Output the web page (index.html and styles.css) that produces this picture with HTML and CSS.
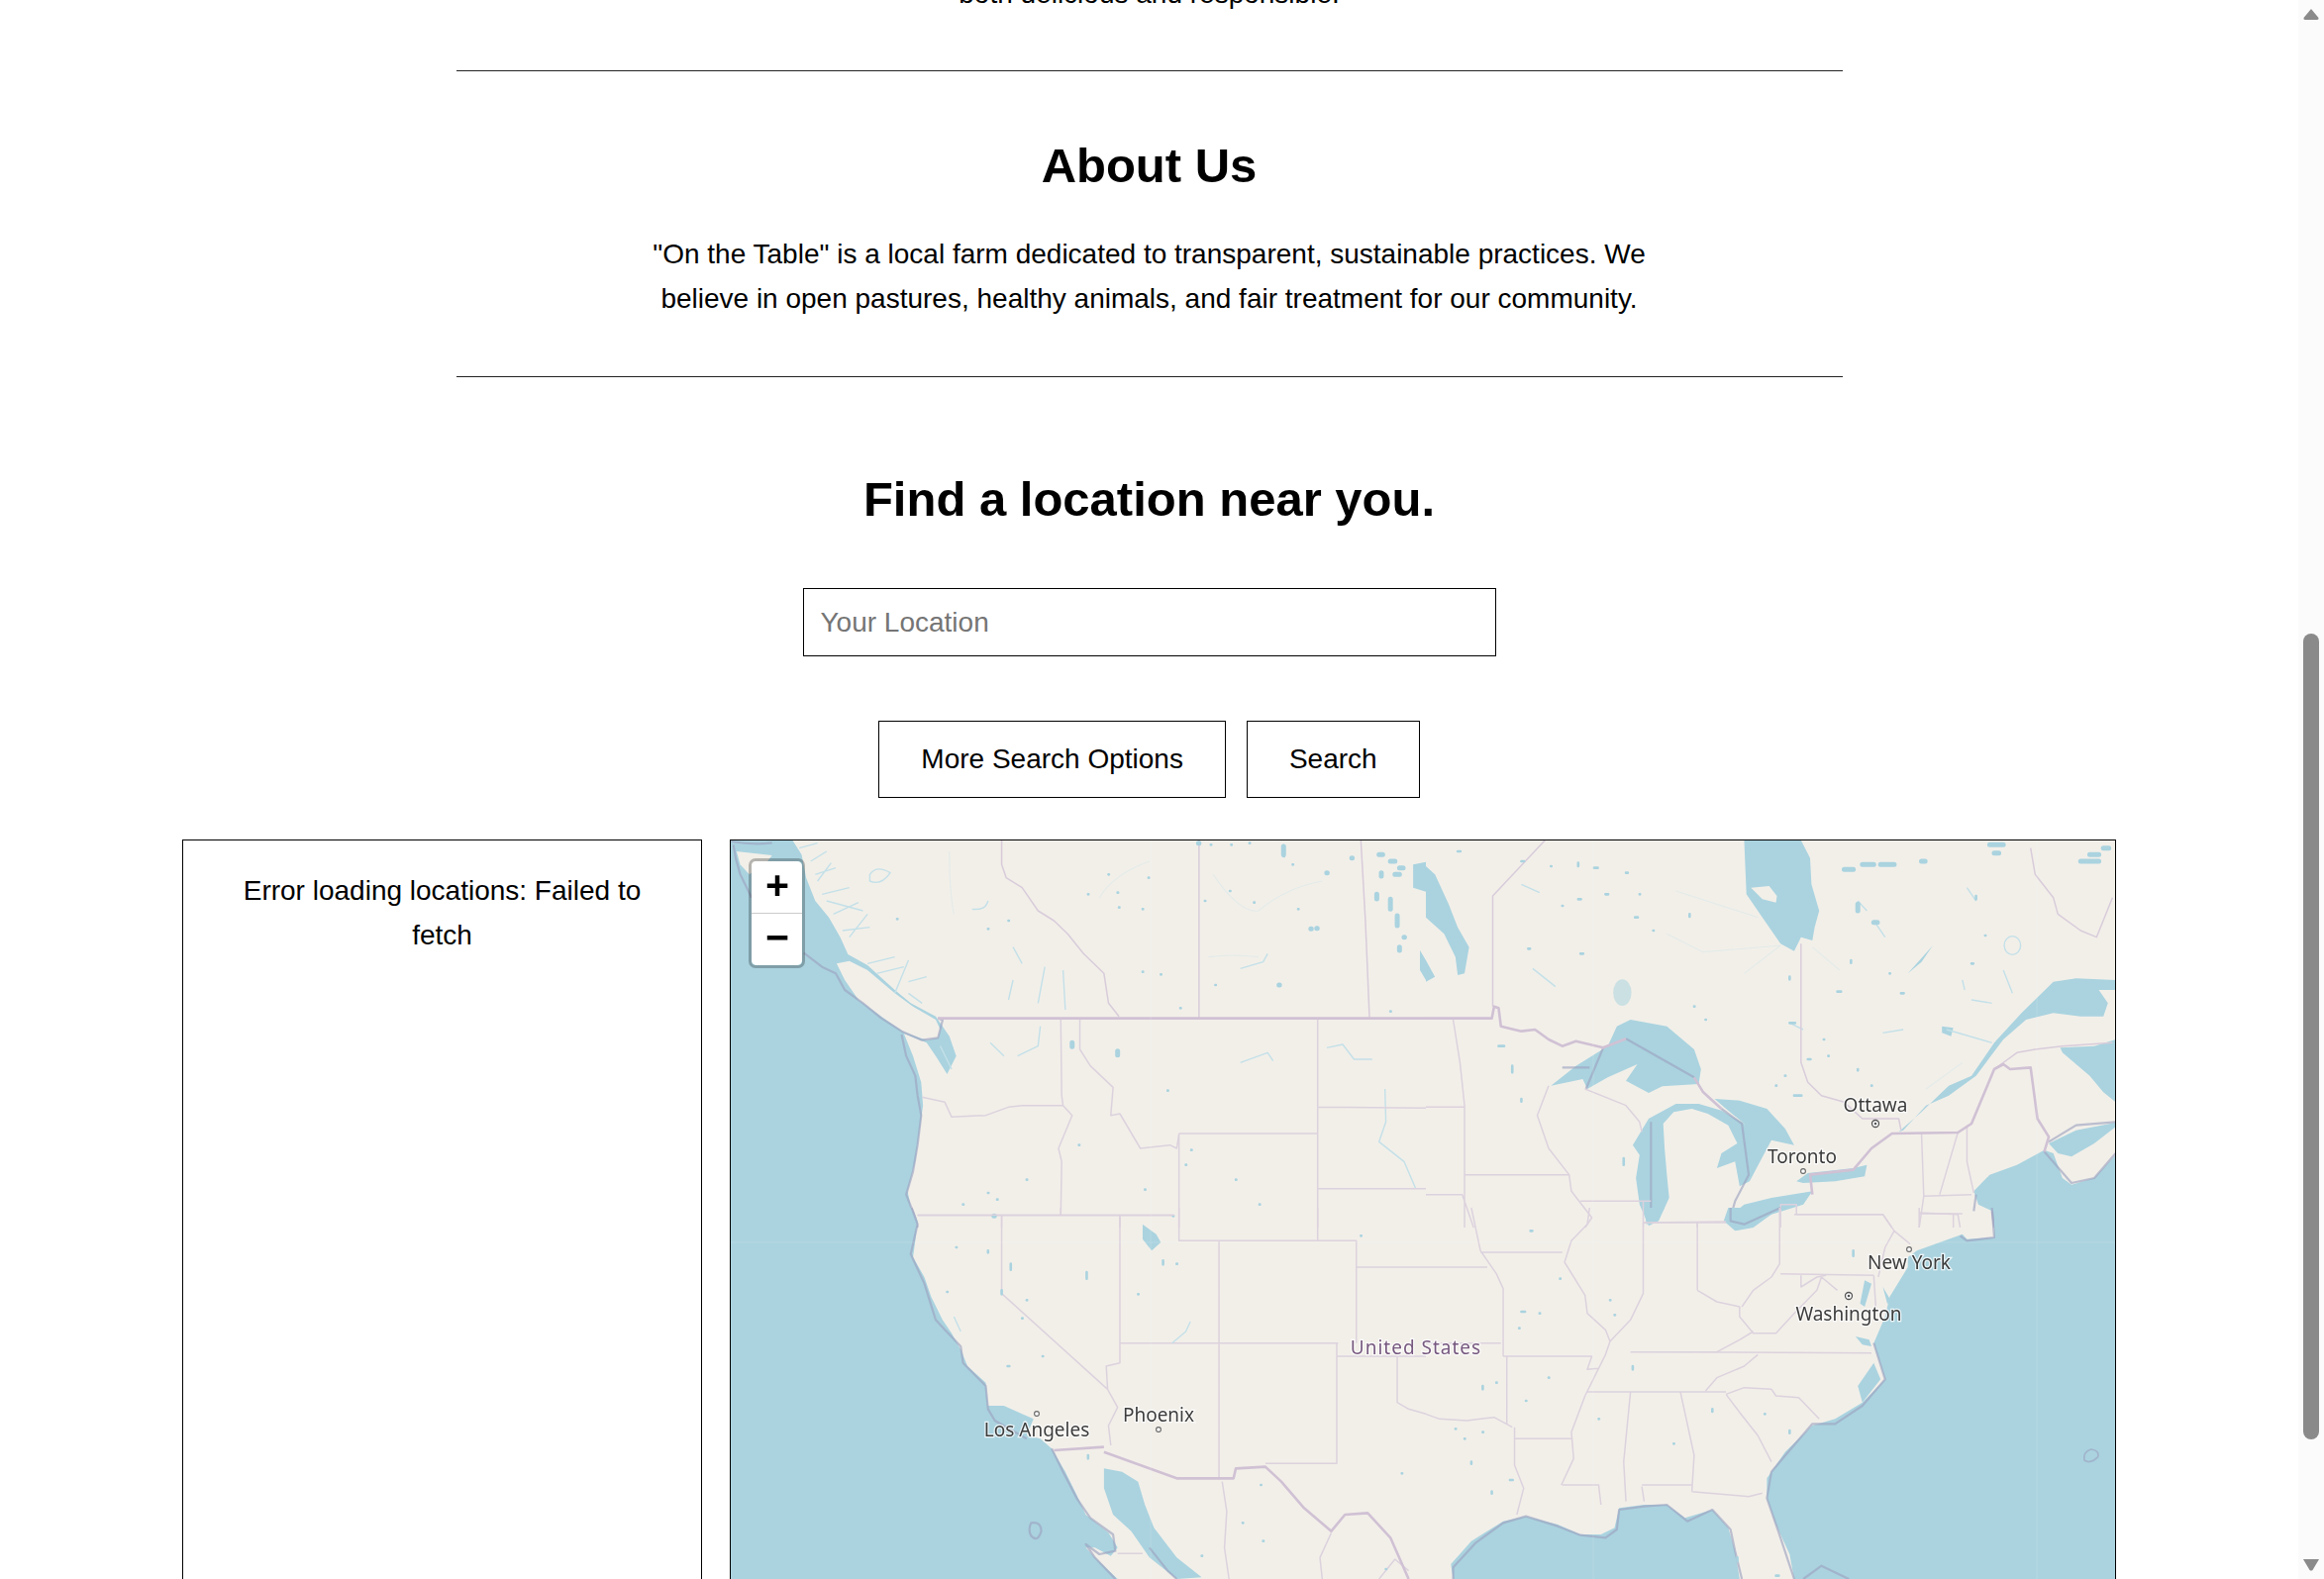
FILE: index.html
```html
<!DOCTYPE html>
<html lang="en">
<head>
<meta charset="utf-8">
<title>On the Table</title>
<link rel="stylesheet" href="styles.css">
</head>
<body>
<div class="shell">
  <main class="page">
    <p class="copy intro">both delicious and responsible.</p>
    <hr class="rule">
    <section class="about">
      <h2 class="heading">About Us</h2>
      <p class="copy about-text">"On the Table" is a local farm dedicated to transparent, sustainable practices. We believe in open pastures, healthy animals, and fair treatment for our community.</p>
    </section>
    <hr class="rule">
    <section class="search">
      <h2 class="heading">Find a location near you.</h2>
      <input class="location" type="text" placeholder="Your Location">
      <div class="actions">
        <button class="btn" type="button">More Search Options</button>
        <button class="btn" type="button">Search</button>
      </div>
    </section>
    <section class="finder">
      <aside class="results">Error loading locations: Failed to fetch</aside>
      <div class="map">
        <svg class="tiles" viewBox="738 849 1398 746" width="1398" height="746" xmlns="http://www.w3.org/2000/svg">
          <g class="soft">
            <!-- north-west -->
            <g transform="translate(720 840) scale(.45918 .33333)">
              <path class="water" d="M38,26 L175,26 L195,70 L205,140 L225,210 L255,260 L280,320 L297,372 L340,405 L400,480 L435,520 L490,560 L520,620 L535,680 L515,735 L490,680 L470,640 L420,612 L440,680 L458,760 L462,830 L455,900 L445,1000 L428,1090 L445,1200 L38,1200 Z"/>
              <path class="land" d="M272,400 L300,392 L340,420 L400,490 L440,530 L490,570 L500,600 L495,625 L470,632 L420,608 L380,570 L320,510 L290,450 Z"/>
              <path class="land" d="M52,60 L130,72 L120,90 L80,130 L60,100 Z"/>
              <path class="water" d="M1540,100 L1568,92 L1568,182 L1540,170 Z M1555,360 L1568,390 L1568,450 L1555,420 Z"/>
              <path class="coast" d="M40,30 Q90,42 130,34 M45,40 L50,80 L60,130 L85,200 M200,368 L240,410 L270,430 L290,480 L330,520 L370,565 L415,605 L460,632 L495,625 L505,572 L495,565 M415,615 L425,680 L445,740 L450,800 L458,860 L450,950 L440,1030 L425,1100 L445,1170 L450,1200"/>
              <path class="river" d="M215,90 L250,60 M225,130 L270,110 M240,190 L300,170 M265,250 L320,215 M285,300 L345,290 M340,400 L400,380 M360,430 L420,410 M190,50 L230,35 M430,455 L470,440 M230,150 L260,95 M250,210 L330,240 M300,320 L340,250 M345,130 Q360,100 390,125 Q370,165 345,150 Z M400,490 L430,390 M430,490 L460,520 M570,235 Q600,240 605,210 M650,510 L660,450 M715,520 L730,410 M770,420 L775,540 M660,350 L680,400 M1160,700 L1220,670 L1232,695 M1350,655 L1385,645 L1410,690 L1450,690 M1478,780 L1480,880 L1465,940 L1520,1000 L1545,1080 M1160,415 L1210,395 L1220,370 M670,680 L715,650 L720,590 M610,640 L640,680 M500,650 L525,720"/>
              <path class="river faint" d="M520,60 Q520,180 530,250 M850,200 Q880,130 960,90 M1100,130 Q1160,250 1200,240 Q1260,170 1340,150 M1090,380 Q1140,370 1200,380"/>
              <path class="prov" d="M635,26 L635,100 L645,140 L680,170 L715,240 L750,270 L780,310 L815,370 L860,430 L870,520 L893,560 M1069,26 L1069,566 M1425,26 L1435,270 L1444,566"/>
              <path class="st" d="M765,566 L767,800 L770,830 L790,860 L760,960 L767,1000 L765,1165 M460,805 L510,820 L525,865 L600,860 L650,835 L680,830 L770,830 M807,566 L807,660 L830,710 L880,775 L875,860 L895,855 L940,960 L1005,950 L1020,960 L1025,915 M1025,915 L1330,915 M1025,915 L1025,1200 M1330,566 L1330,1200 M1330,835 L1568,838 M1330,1082 L1568,1082 M450,1163 L1015,1163 M895,1163 L895,1200 M635,1163 L635,1200"/>
              <path class="nat" d="M495,566 L1568,566"/>
              <path class="dots" d="M958,140h1M890,185h1M945,235h1M870,130h1M825,190h1M893,230h1M650,270h1M605,295h1M405,265h1M1105,465h1M1190,215h1M1255,75h1M1275,100h1M1180,35h1M1140,40h1M1095,40h1M1287,235h1M1082,210h1M1137,180h1M985,433h1M945,425h1M1028,535h1M1490,545h1M1052,965h1M1040,1010h1M950,1085h1M805,950h1M690,1055h1M550,1130h1M1012,1165h1M605,1095h1M625,1115h1M1150,1055h1M1202,1130h1M1000,785h1"/>
              <path class="dots big" d="M1245,465h1M1315,295h1M1328,293h1M1068,35h1M1350,125h1M1405,80h1M890,665v12M790,640v12M618,1165h1M1255,45v25M1465,70h8M1490,90h10M1510,110h8M1470,125v10M1460,190v14M1490,205v30M1505,255v30M1520,320h1M1510,350v10M1500,130h10"/>
            </g>
            <!-- north-east -->
            <g transform="translate(1440 840) scale(.45918 .33333)">
              <path class="water" d="M0,105 L20,130 L50,220 L70,290 L95,350 L85,430 L70,435 L65,380 L40,310 L0,260 Z M0,390 L20,440 L0,455 Z"/>
              <path class="water" d="M700,26 L825,26 L845,80 L848,160 L865,240 L855,290 L850,330 L825,320 L810,362 L780,340 L740,260 L705,190 Z"/>
              <path class="land" d="M715,170 L755,165 L772,195 L770,215 L740,205 Z"/>
              <path class="water" d="M275,770 L330,710 L400,650 L420,590 L450,570 L530,590 L590,660 L605,720 L600,765 L520,772 L490,792 L440,755 L465,705 L400,745 L355,780 L345,750 Z"/>
              <path class="water" d="M455,950 L490,870 L550,825 L600,825 L650,845 L700,885 L712,950 L712,1060 L690,1075 L680,1000 L640,1020 L650,975 L685,945 L665,890 L620,855 L585,840 L545,850 L522,885 L525,960 L530,1040 L535,1110 L512,1180 L490,1195 L470,1130 L462,1050 L470,980 Z"/>
              <path class="water" d="M635,810 L690,815 L750,840 L790,900 L810,950 L760,935 L735,1000 L712,1060 L700,885 L660,840 Z"/>
              <path class="water" d="M665,1170 L700,1130 L760,1110 L850,1090 L830,1130 L760,1160 L700,1195 L670,1190 Z"/>
              <path class="water" d="M815,1060 L840,1035 L940,1020 L970,1010 L965,1045 L900,1060 L830,1065 Z"/>
              <path class="water" d="M1040,910 L1090,850 L1150,770 L1200,740 L1250,640 L1310,550 L1380,455 L1430,445 L1517,450 L1517,480 L1480,480 L1500,520 L1490,560 L1440,560 L1380,550 L1320,570 L1270,630 L1210,740 L1150,800 L1100,830 L1050,905 Z"/>
              <path class="water" d="M1395,655 L1470,650 L1517,630 L1517,820 L1490,790 L1460,740 L1400,670 Z M1370,945 L1430,905 L1517,882 L1517,895 L1470,945 L1420,985 L1390,975 Z"/>
              <path class="water" d="M1250,1200 L1245,1150 L1215,1130 L1205,1090 L1240,1040 L1300,1010 L1360,965 L1380,975 L1400,1050 L1420,1070 L1470,1050 L1517,980 L1517,1200 Z"/>
              <path class="water" d="M1060,430 L1115,345 L1090,395 Z M1135,590 L1160,595 L1155,620 L1135,610 Z"/>
              <ellipse class="water pale" cx="432" cy="488" rx="20" ry="40"/>
              <path class="coast" d="M440,628 L590,745 M650,840 L695,885 L710,1040 L680,1120 L670,1170 L690,1195 M495,880 L495,1180 M352,780 L390,655 M300,715 L360,715 M1210,1100 L1205,1150 M1245,1150 L1250,1200 M1360,970 L1420,1065 L1470,1050 L1517,975 M1370,940 L1430,890 L1517,880"/>
              <path class="river" d="M210,160 L250,185 M1290,320 m-18,25 a18,28 0 1 0 36,0 a18,28 0 1 0 -36,0 M1180,450 L1185,480 M1270,420 L1290,490 M1005,610 L1050,600 M1200,510 L1245,520 M235,415 L285,470 M1145,600 L1245,640 M1190,170 L1210,210 M950,210 L970,240 M985,270 L1010,320 M800,580 L830,600"/>
              <path class="river faint" d="M550,180 L730,260 M530,310 L610,365 L780,345 M700,430 L780,345 M850,350 L910,420 M1100,780 L1180,700"/>
              <path class="prov" d="M147,530 L147,195 L262,26 M825,340 L825,700 L840,760 L870,800 L920,820 L960,870 L1040,870 L1045,905 M1330,50 L1340,130 L1380,200 L1390,250 L1440,300 L1475,320 L1510,200 M1250,720 L1300,670 L1340,660 L1400,650 L1510,640"/>
              <path class="st" d="M60,570 L75,700 L85,830 L85,1200 M0,835 L85,835 M85,1040 L315,1040 M0,1100 L80,1100 L105,1200 M270,770 L245,860 L270,960 L315,1040 L320,1090 L365,1170 L350,1200 M350,780 L440,830 L470,880 L475,910 M340,1120 L495,1120 M478,1120 L478,1200 M478,1185 L660,1185 M597,1185 L597,1200 M780,1200 L780,1130 L815,1130 L815,1160 L1005,1160 L1025,1200 M1090,915 L1095,1105 L1085,1200 M1190,890 L1190,1000 L1205,1095 M1170,912 L1130,1100 M1095,1105 L1200,1100 M1085,1155 L1170,1160 L1175,1200"/>
              <path class="nat" d="M0,566 L145,566 L150,530 L160,535 L165,590 L210,605 L240,600 L270,630 L300,650 L330,635 L390,655 L440,628 M590,745 L610,790 L650,840 M850,1100 L845,1040 L940,1025 L980,960 L1025,915 L1170,912 L1200,885 L1250,720 L1270,705 L1285,720 L1330,715 L1345,870 L1370,925 L1360,970"/>
              <path class="dots" d="M70,60h6M210,90h6M275,105h1M335,95v10M440,125h4M580,250v8M300,225h1M225,355h4M190,710v20M210,810v8M435,990v20M370,110h8M160,650h12M470,190h1M395,190h6M335,205h6M460,260h6M340,370h6M500,300h1M800,440v8M615,570h1M590,530h1M810,800h16M1210,195v10M1200,400h4M1020,430h1M1045,490h4M905,485h8M935,390v8M875,630h1M885,680h1M950,720v4M840,690h6M1230,315h1M1050,490h1M980,770h1M790,740h1M770,770h1M800,580h12"/>
              <path class="dots big" d="M920,115h20M960,100h25M1000,100h30M1090,90h8M950,220v20M985,275h8M1240,40h30M1250,65h10M1440,90h40M1490,50h12M1460,70h20"/>
            </g>
            <!-- south-west -->
            <g transform="translate(720 1220) scale(.45918 .33333)">
              <path class="water" d="M38,0 L435,0 L450,40 L445,100 L440,150 L465,210 L480,270 L505,340 L525,380 L545,430 L560,480 L600,530 L605,600 L640,600 L680,625 L705,640 L690,690 L720,700 L745,730 L775,800 L800,870 L820,930 L870,985 L890,1030 L875,1055 L840,1030 L820,1030 L840,1060 L890,1125 L38,1125 Z"/>
              <path class="water" d="M860,790 L900,800 L935,830 L950,900 L970,970 L1020,1060 L1075,1120 L1020,1125 L960,1060 L920,980 L880,930 L860,850 Z"/>
              <path class="water" d="M945,50 L975,80 L985,105 L965,130 L945,95 Z"/>
              <path class="coast" d="M437,0 L450,50 L435,140 L465,230 L490,340 L510,370 L545,420 L550,470 L600,540 L605,610 L620,645 L690,700 M745,730 L770,800 L800,880 L830,940 L880,990 L885,1040 L850,1050 L820,1020 L840,1060 L885,1125 M700,955 Q722,950 722,980 Q715,1015 700,995 Q692,975 700,955 Z M960,1030 L1000,1100 L1020,1125"/>
              <path class="st" d="M635,25 L635,260 L868,550 M868,550 L890,605 L870,660 L875,720 M895,25 L895,470 L865,480 L868,550 M450,22 L1015,22 M1025,0 L1025,100 L1415,100 L1415,410 M1113,100 L1113,820 M895,410 L1375,410 M1415,180 L1568,180 M1372,410 L1372,775 L1215,775 M1372,450 L1568,450 M1505,450 L1505,590 L1530,610 L1568,625 M1330,0 L1330,100 M765,0 L765,22 M1120,830 L1130,920 L1125,1030 L1135,1125 M1360,985 L1335,1060 L1340,1125 M890,1048 L945,1048 M1465,1125 L1500,1065 L1530,1100"/>
              <path class="nat" d="M750,735 L860,725 M860,740 L1020,820 L1145,820 L1150,790 L1215,785 L1250,830 L1300,910 L1360,980 L1390,930 L1440,925 L1490,1000 L1530,1125"/>
              <path class="dots" d="M605,130v6M535,120h1M655,170v18M822,195v20M990,160v12M1020,170h1M935,262h1M690,280h1M680,335h1M635,250v12M515,255h1M648,480h4M725,450h1M825,750v10M1205,840h1M1210,1010h1M1165,955h1M1515,805h1M1480,1095h1M1075,1055h1M1425,85h1"/>
              <path class="river" d="M530,330 L545,375 M1010,410 L1040,375 L1050,345"/>
            </g>
            <!-- south-east -->
            <g transform="translate(1440 1220) scale(.45918 .33333)">
              <path class="water" d="M1250,0 L1250,90 L1190,95 L1180,80 L1080,130 L1060,150 L1060,180 L1020,270 L1010,330 L985,410 L1010,520 L960,590 L900,640 L850,660 L790,740 L750,820 L750,880 L770,960 L800,1050 L810,1125 L1517,1125 L1517,0 Z"/>
              <path class="water" d="M60,1125 L55,1080 L100,1010 L170,950 L220,935 L290,960 L340,990 L385,990 L415,970 L425,910 L480,900 L530,900 L570,940 L630,915 L665,970 L680,1040 L690,1125 Z"/>
              <path class="water" d="M480,0 L525,0 L510,35 L485,50 Z M665,0 L780,0 L720,60 L680,70 L655,40 Z M965,220 L980,230 L965,300 L955,290 Z M1005,240 L1022,280 L1015,292 Z M950,540 L985,470 L1000,520 L960,590 Z M945,390 L975,400 L980,420 L960,415 Z"/>
              <path class="coast" d="M670,0 L670,40 L700,50 L780,0 M1245,0 L1250,90 L1190,100 L1175,85 M985,410 L1010,520 L960,600 L900,655 L850,655 L800,735 L760,800 L750,880 L775,980 L810,1125 M60,1125 L60,1090 L110,1015 L170,955 L220,935 L290,965 L340,992 L395,1000 L420,975 L425,915 L480,905 L530,900 L575,950 L630,915 L670,975 L680,1040 L695,1125 M830,1125 L870,1085 L930,1125"/>
              <path class="coast thin" d="M1463,732 Q1482,735 1478,755 Q1462,778 1448,765 Q1445,740 1463,732 Z"/>
              <path class="st" d="M478,45 L478,260 L450,340 L405,405 M597,45 L597,250 M480,45 L660,42 M778,0 L778,170 L760,210 L720,250 L695,300 M597,250 L640,285 L690,300 L690,330 L720,380 L770,380 L810,320 L860,250 L870,210 L905,250 M450,437 L640,437 L690,400 L720,375 M450,437 L980,440 M730,445 L700,480 L640,515 L615,555 M355,558 L660,558 M660,565 L700,545 L760,550 L770,570 L820,575 L865,640 M660,565 L690,620 L730,690 L760,770 M585,860 L710,875 L740,865 M560,560 L590,750 L585,860 M450,558 L435,770 L440,890 M475,840 L585,840 M475,845 L480,890 M300,840 L380,840 L385,900 M405,405 L395,445 L350,570 L320,680 L325,760 L298,840 M360,0 L355,50 L320,100 L305,165 L350,265 L355,320 L395,370 L405,405 M120,135 L300,135 M0,180 L135,180 M100,0 L120,130 L155,200 L170,245 L170,450 M170,450 L365,450 L355,490 L380,487 M178,450 L178,655 M0,625 L30,640 L90,645 L150,635 L190,665 M195,665 L195,780 L215,850 L200,930 M195,700 L320,700 M0,410 L165,410 M985,205 L990,310 M780,200 L985,205 M825,205 L825,240 L860,210 L880,205 M810,20 L1005,20 L1030,70 L1010,120 L995,210 M1030,70 L1065,110 M1085,0 L1085,60 M1160,20 L1160,60 M1085,18 L1180,18"/>
              <path class="dots" d="M230,70h4M295,215h1M405,280h1M415,325h1M210,315h8M250,320h1M205,365h1M125,540v10M155,530h1M270,515h1M220,585h1M380,640h1M545,715h1M630,610v8M745,625h1M800,675v8M100,770v6M145,860v6M185,825h6M455,480v10M65,670h1M85,700h1M125,680h1M685,1060v12M770,1115h6M940,130v16"/>
            </g>
            <path class="seam" d="M738,1255 H2136 M1162,849 V1595 M1609,849 V1595 M2057,849 V1595"/>
          </g>
          <g class="labels">
            <text class="city" x="1894" y="1123">Ottawa</text>
            <text class="city" x="1820" y="1175">Toronto</text>
            <text class="city" x="1928" y="1282">New York</text>
            <text class="city" x="1867" y="1334">Washington</text>
            <text class="city" x="1047" y="1451">Los Angeles</text>
            <text class="city" x="1170" y="1436">Phoenix</text>
            <text class="country" x="1430" y="1368">United States</text>
            <circle class="capital" cx="1894" cy="1135" r="3.5"/>
            <circle class="capital-core" cx="1894" cy="1135" r="1.3"/>
            <circle class="capital" cx="1867" cy="1309" r="3.5"/>
            <circle class="capital-core" cx="1867" cy="1309" r="1.3"/>
            <circle class="town" cx="1821" cy="1183" r="2.4"/>
            <circle class="town" cx="1928" cy="1262" r="2.4"/>
            <circle class="town" cx="1047" cy="1428" r="2.4"/>
            <circle class="town" cx="1170" cy="1444" r="2.4"/>
          </g>
        </svg>
        <div class="zoom">
          <button class="zoom-btn zoom-in" type="button">+</button>
          <button class="zoom-btn" type="button">−</button>
        </div>
      </div>
    </section>
  </main>
  <div class="scrollbar" aria-hidden="true">
    <svg class="arrow" viewBox="0 0 16 12" width="16" height="12" xmlns="http://www.w3.org/2000/svg"><path d="M8,1 L15.5,10 Q16,12 14,12 L2,12 Q0,12 .5,10 Z"/></svg>
    <div class="thumb"></div>
    <svg class="arrow arrow-down" viewBox="0 0 16 12" width="16" height="12" xmlns="http://www.w3.org/2000/svg"><path d="M0,0 L16,0 L9.5,11 Q8,12 6.5,11 Z"/></svg>
  </div>
</div>
</body>
</html>
```
FILE: styles.css
```css
html, body {
  margin: 0;
  height: 100%;
  overflow: hidden;
  background: #fff;
}
body {
  font-family: "Liberation Sans", Arial, sans-serif;
  color: #000;
}
.shell {
  display: flex;
  height: 100vh;
}
.page {
  flex: 1;
  min-width: 0;
  overflow: hidden;
  display: flex;
  flex-direction: column;
  align-items: center;
  text-align: center;
}
.copy {
  margin: 0;
  font-size: 28px;
  line-height: 44.8px;
}
.intro {
  flex: none;
  margin-top: -28px;
  margin-bottom: 54.2px;
}
.rule {
  flex: none;
  width: 1400px;
  height: 0;
  margin: 0;
  border: 0;
  border-top: 1px solid #222;
}
.heading {
  margin: 0;
  font-size: 49px;
  line-height: 55px;
  font-weight: 700;
}
.about {
  flex: none;
  padding: 68px 0 55px;
}
.about-text {
  width: 1050px;
  margin-top: 40px;
}
.search {
  flex: none;
  padding-top: 96px;
  display: flex;
  flex-direction: column;
  align-items: center;
}
.location {
  box-sizing: border-box;
  width: 700px;
  height: 69px;
  margin-top: 62px;
  padding: 2px 17px 0;
  border: 1px solid #000;
  border-radius: 0;
  background: #fff;
  font: 28px "Liberation Sans", Arial, sans-serif;
}
.location::placeholder {
  color: #757575;
  opacity: 1;
}
.actions {
  display: flex;
  gap: 21px;
  margin-top: 65.5px;
}
.btn {
  box-sizing: border-box;
  height: 78px;
  padding: 0 42px;
  border: 1px solid #000;
  border-radius: 0;
  background: #fff;
  color: #000;
  font: 28px "Liberation Sans", Arial, sans-serif;
}
.finder {
  flex: none;
  display: flex;
  gap: 28px;
  height: 900px;
  margin-top: 42px;
}
.results {
  box-sizing: border-box;
  width: 525px;
  padding: 29px 36px;
  border: 1px solid #000;
  font-size: 28px;
  line-height: 44.8px;
}
.map {
  position: relative;
  box-sizing: border-box;
  width: 1400px;
  border: 1px solid #000;
  background: #f2efe9;
  overflow: hidden;
}
.tiles {
  display: block;
}
.zoom {
  position: absolute;
  left: 18px;
  top: 18px;
  display: flex;
  flex-direction: column;
  border: 3px solid rgba(0, 0, 0, .25);
  border-radius: 7px;
  background-clip: padding-box;
}
.zoom-btn {
  box-sizing: border-box;
  width: 51px;
  height: 52px;
  padding: 3px 0 0 1px;
  border: 0;
  background: #fff;
  color: #000;
  font: 700 41px/49px "Liberation Mono", monospace;
}
.zoom-in {
  height: 53px;
  border-bottom: 1px solid #ccc;
  border-radius: 5px 5px 0 0;
}
.zoom-btn:last-child {
  border-radius: 0 0 5px 5px;
}
.soft {
  filter: blur(.75px);
}
.labels {
  filter: blur(.3px);
}
.water {
  fill: #aad3df;
}
.water.pale {
  opacity: .55;
}
.land {
  fill: #f2efe9;
}
.coast, .st, .nat, .prov, .river, .dots, .seam {
  fill: none;
  vector-effect: non-scaling-stroke;
  stroke-linejoin: round;
}
.coast {
  stroke: #9da3c0;
  stroke-width: 2.2;
  stroke-opacity: .65;
}
.coast.thin {
  stroke-width: 1.6;
}
.st {
  stroke: #dcd2dd;
  stroke-width: 1.5;
}
.prov {
  stroke: #d8ccda;
  stroke-width: 1.5;
}
.nat {
  stroke: #d0c1d4;
  stroke-width: 2.6;
}
.river {
  stroke: #c3e0e8;
  stroke-width: 1.4;
}
.river.faint {
  stroke: #e3ebe9;
  stroke-width: 1.1;
}
.dots {
  stroke: #aad3df;
  stroke-width: 2.6;
  stroke-linecap: round;
}
.dots.big {
  stroke-width: 5;
}
.seam {
  stroke: #fff;
  stroke-opacity: .14;
  stroke-width: 1;
}
.city, .country {
  text-anchor: middle;
  font-family: "Noto Sans", sans-serif;
  paint-order: stroke;
  stroke: rgba(255, 255, 255, .75);
  stroke-width: 2.5px;
}
.city {
  font-size: 19px;
  fill: #3c3c3c;
}
.country {
  font-size: 19px;
  letter-spacing: 1px;
  fill: #76587f;
}
.capital {
  fill: #fff;
  stroke: #555;
  stroke-width: 1.3;
}
.capital-core {
  fill: #555;
}
.town {
  fill: #fff;
  stroke: #666;
  stroke-width: 1.1;
}
.scrollbar {
  flex: none;
  box-sizing: border-box;
  width: 26px;
  padding: 8px 0;
  display: flex;
  flex-direction: column;
  align-items: center;
  background: #fbfbfb;
}
.arrow {
  flex: none;
  fill: #8a8a8a;
}
.arrow-down {
  margin-top: auto;
}
.thumb {
  flex: none;
  width: 16px;
  height: 814px;
  margin-top: 620px;
  border-radius: 8px;
  background: #8a8a8a;
}
```
